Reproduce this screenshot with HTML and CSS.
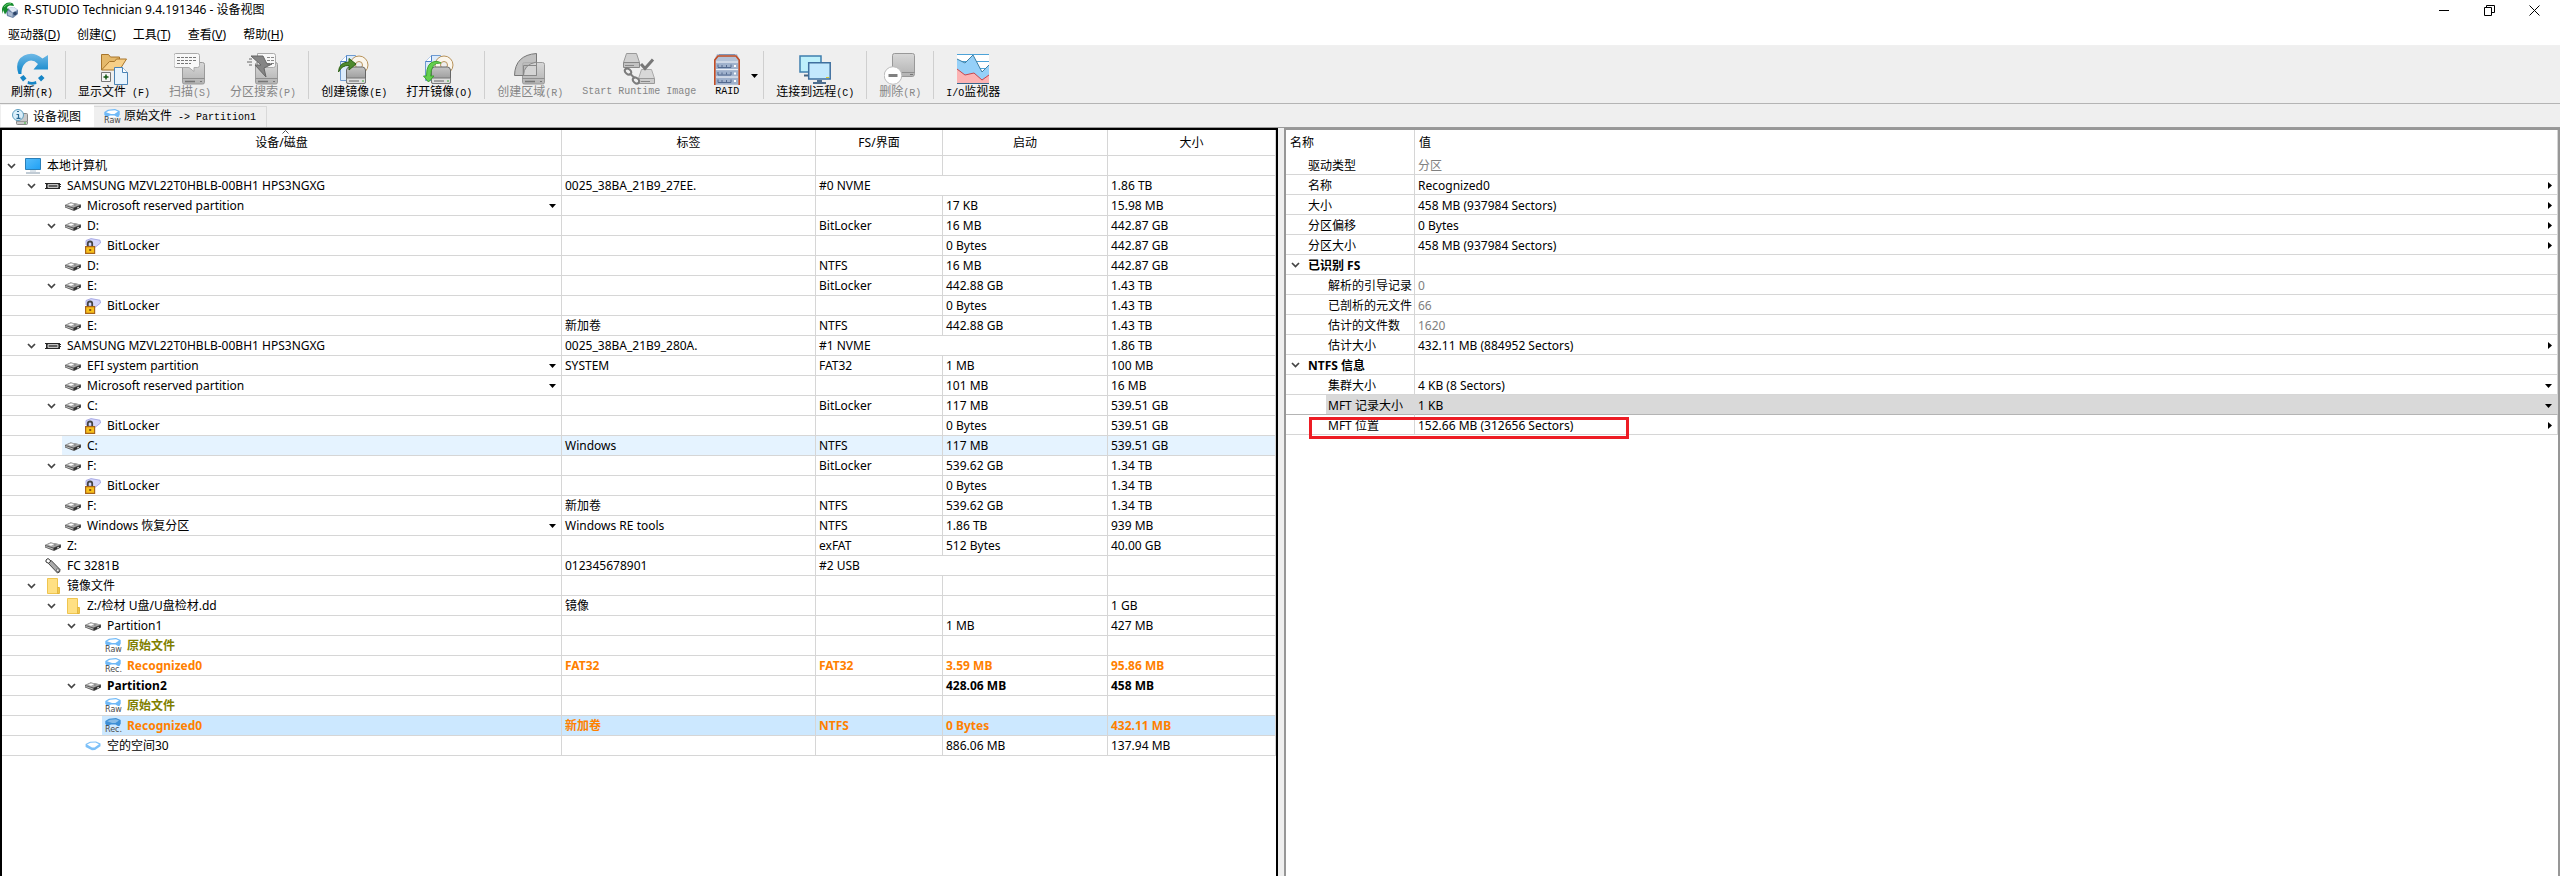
FILE: index.html
```html
<!DOCTYPE html>
<html lang="zh-CN">
<head>
<meta charset="utf-8">
<title>R-STUDIO Technician 9.4.191346 - 设备视图</title>
<link rel="stylesheet" href="styles.css">
</head>
<body>
<svg class="sprite" aria-hidden="true">
  <defs>
    <linearGradient id="gBlue" x1="0" y1="0" x2="0" y2="1"><stop offset="0" stop-color="#6fb9e6"/><stop offset="1" stop-color="#0b84c9"/></linearGradient>
    <linearGradient id="gGrey" x1="0" y1="0" x2="0" y2="1"><stop offset="0" stop-color="#d8d8d8"/><stop offset="1" stop-color="#b2b2b2"/></linearGradient>
    <linearGradient id="gDisk" x1="0" y1="0" x2="0" y2="1"><stop offset="0" stop-color="#c4c4c4"/><stop offset="1" stop-color="#8e8e8e"/></linearGradient>
    <linearGradient id="gScreen" x1="0" y1="0" x2="1" y2="1"><stop offset="0" stop-color="#56bdfb"/><stop offset="1" stop-color="#1fa0f5"/></linearGradient>
  </defs>
  <symbol id="chev" viewBox="0 0 9 6"><path d="M1 1l3.5 3.6L8 1" fill="none" stroke="#444" stroke-width="1.7"/></symbol>
  <symbol id="down" viewBox="0 0 7 4"><path d="M0 0h7L3.5 4z"/></symbol>
  <symbol id="right" viewBox="0 0 4 7"><path d="M0 0v7l4-3.5z"/></symbol>
  <symbol id="pc" viewBox="0 0 16 16"><path d="M.5.5h15v11H.5z" fill="url(#gScreen)" stroke="#2a7fb8"/><path d="M5 13h6" stroke="#b5c6d4"/><path d="M1 15h14" stroke="#8297aa"/></symbol>
  <symbol id="nvme" viewBox="0 0 16 16"><path d="M0 5h15v1h1v1h-1v1h1v1h-1v2H0v-1h1V6H0z" fill="#262626"/><path d="M3 6.500h10v3H3z" fill="#8c8c8c" stroke="#c4c4c4"/><path d="M4 8h8" stroke="#333"/></symbol>
  <symbol id="disk" viewBox="0 0 16 16"><path d="M0 7l5.500-2.500L16 6.500v3L9 13 0 9.500z" fill="#5c5c5c"/><path d="M0 7l5.500-2.500L16 6.500 8.500 9.500z" fill="#a9a9a9"/><path d="M3 6.800l3-1.300 3 .8-3 1.400z" fill="#fff"/><path d="M9 6.500l3 .3-2.500 1z" fill="#6f6f6f"/><path d="M.5 8.500L8 11" stroke="#bdbdbd"/><path d="M9 10l6.500-2.800v2L9 12.200z" fill="#2f2f2f"/><path d="M12 9.600l2-.9v1l-2 .9z" fill="#d5d5d5"/></symbol>
  <symbol id="lock" viewBox="0 0 16 16"><path d="M1 2.500L6 .6l9 1.600.5 2.800-5 4L1 7z" fill="#d5d6fa" stroke="#9b9ce0" stroke-width=".8"/><path d="M2.800 9V5.500q0-2 2.200-2t2.200 2V9" fill="none" stroke="#444" stroke-width="1.800"/><path d="M.6 8.600h9v6.800h-9z" fill="#f8c21c" stroke="#a8641a" stroke-width="1.200"/><path d="M4.200 11h2v2h-2z" fill="#8a5714"/></symbol>
  <symbol id="usb" viewBox="0 0 16 16"><path d="M1 2l2-1.500 3 2.500-2 2.500L1 4z" fill="#fff" stroke="#333"/><path d="M3.500 5.500l2.700-3L15 11.500q.5 3-2.500 3.500z" fill="#aaa" stroke="#444"/><path d="M11.500 11h2.500v2.500h-2.500z" fill="#eee" stroke="#555" stroke-width=".6"/></symbol>
  <symbol id="folder" viewBox="0 0 16 16"><path d="M2.500.5h10v9h2v6h-12z" fill="#ffe083" stroke="#efc54f"/><path d="M12.500 15.500v-6h1.500v6z" fill="#ffd75c" stroke="#d9a92f" stroke-width=".7"/></symbol>
  <symbol id="free" viewBox="0 0 16 16"><path d="M.6 6L5 3.800l6-.3 4.500 2v2.700L10 12 7 12.200.6 9z" fill="#7cc0f8"/><path d="M2 6.500L5.500 4.800l5-.2L14 6.200 9.500 9.500H7z" fill="#fff"/></symbol>
  <symbol id="vol" viewBox="0 0 16 8"><path d="M.3 3L4 .8 11 0l4.700 2v3.500L14.500 8H1.500L.3 5.500z" fill="#6fb9f7"/><path d="M2 3.200L5 1.800l6-.6 3 1.300L10.500 5H7z" fill="#fff"/><path d="M3 8l3-1.500h4.500L13 8z" fill="#fff"/></symbol>
  <symbol id="volsel" viewBox="0 0 16 8"><path d="M.3 3L4 .8 11 0l4.700 2v3.500L14.500 8H1.500L.3 5.500z" fill="#3c8fd6"/><path d="M2 3.200L5 1.800l6-.6 3 1.300L10.500 5H7z" fill="#86bbe6"/><path d="M3 8l3-1.500h4.500L13 8z" fill="#cce8ff"/></symbol>
  <symbol id="ghost" viewBox="0 0 32 32"><path d="M8.500 11.500q0-2 2-2h18q2 0 2 2v18q0 1.500-2 1.500h-18q-2 0-2-1.500z" fill="url(#gGrey)" stroke="#9a9a9a"/><path d="M8.500 25.500h22" stroke="#8f8f8f"/><path d="M11 28.500h10" stroke="#777" stroke-width="1.500"/><path d="M26 28.500h2" stroke="#777"/></symbol>
  <symbol id="image" viewBox="0 0 32 32"><path d="M2.500 8.500l6-6h9v25h-15z" fill="#dcebfb" stroke="#6f9bd1"/><path d="M2.500 8.500h6v-6" fill="#fff" stroke="#4b7fc4"/><circle cx="21" cy="12" r="9" fill="#fbf6ec" stroke="#b8935a"/><circle cx="21" cy="12" r="3.500" fill="#eee" stroke="#b8935a"/><path d="M8.500 17q.5-3 3-3h13q2.500 0 3 3v12q0 1.500-1.500 1.500H10q-1.500 0-1.500-1.500z" fill="url(#gDisk)" stroke="#666"/><path d="M8.500 25h19v4q0 1.500-1.500 1.500H10q-1.500 0-1.500-1.500z" fill="#ddd" stroke="#777"/><path d="M11 28h10" stroke="#666"/><path d="M24 28h2" stroke="#3a3"/></symbol>
</svg>

<header class="titlebar">
  <svg class="i16" viewBox="0 0 16 16"><path d="M6 6l6-1 4 3v4l-5 4-6-2-1-5z" fill="#6f87a8"/><path d="M6 6l6-1 3.500 3-5 2.500z" fill="#dfe8f5"/><path d="M6 9l4.500 2v4L6 13z" fill="#a9b9d0"/><circle cx="13" cy="11.500" r="1.800" fill="#2c4468"/><path d="M1 12Q-1.500 6 2 3q4-4 9-1.500l1 2.500-4-.5Q5 4 5 6.500l1.500.5L3 12.500 1 8z" fill="#138a2c"/><path d="M2 5q2.500-3.500 7-3.500" fill="none" stroke="#67c96f"/></svg>
  <h1>R-STUDIO Technician 9.4.191346 - 设备视图</h1>
  <div class="winbtns">
    <button type="button" aria-label="最小化"><svg viewBox="0 0 11 11"><path d="M0 5.500h10"/></svg></button>
    <button type="button" aria-label="还原"><svg viewBox="0 0 11 11"><path d="M.5 2.500h7v8h-7zM2.500 2.500v-2h8v7h-3"/></svg></button>
    <button type="button" aria-label="关闭"><svg viewBox="0 0 11 11"><path d="M.5.5l10 10M10.500.5l-10 10"/></svg></button>
  </div>
</header>

<nav class="menubar">
  <button type="button">驱动器(<u>D</u>)</button>
  <button type="button">创建(<u>C</u>)</button>
  <button type="button">工具(<u>T</u>)</button>
  <button type="button">查看(<u>V</u>)</button>
  <button type="button">帮助(<u>H</u>)</button>
</nav>

<div class="toolbar" role="toolbar">
  <div class="group">
    <button type="button"><svg class="i32" viewBox="0 0 32 32"><path d="M2.500 21Q-2 8 8 2.500 17.500-2 26.500 5.500L32 2v14.500H17.500L22 11q-6-6-12-1.500Q5 14 5.500 21z" fill="url(#gBlue)"/><path d="M4 24.500l3.500-2.500 3 3.500-3.500 3zM12 28q4 2 8 0l.5 3q-4.500 1.500-9 0zM22 25l3.500-3 3 3-3.500 3.500z" fill="#1585c6"/></svg><span>刷新<span class="m">(R)</span></span></button>
  </div>
  <div class="group">
    <button type="button"><svg class="i32" viewBox="0 0 32 32"><path d="M3.500 17V1.500h7l2 2.500h9v3" fill="#e5b96b" stroke="#a8752b"/><path d="M3.500 17l8-8.500h5l2-2.500h10l-7 11z" fill="#f7cf87" stroke="#a8752b"/><path d="M3.500 19.500h9v9h-9z" fill="#f6f6f6" stroke="#777"/><path d="M5.500 24h5M8 21.500v5" stroke="#151" stroke-width="1.500"/><path d="M16.500 14.500h8l5 5v12h-13z" fill="#e7f3fd" stroke="#4b83b5"/><path d="M24.500 14.500v5h5" fill="#fff" stroke="#4b83b5"/></svg><span>显示文件<span class="m">&nbsp;(F)</span></span></button>
    <button type="button" disabled><svg class="i32" viewBox="0 0 32 32"><use href="#ghost"/><path d="M1.500.5h22q2 0 2 2v10q0 2-2 2H20v4l-5-4H1.500q-1.500 0-1.500-2v-10q0-2 1.500-2z" fill="#f8f8f8" stroke="#aaa"/><path d="M3 4.500h19M3 7.500h19M3 10.500h14" stroke="#777" stroke-dasharray="3 1"/></svg><span>扫描<span class="m">(S)</span></span></button>
    <button type="button" disabled><svg class="i32" viewBox="0 0 32 32"><use href="#ghost"/><path d="M10.500.5h16q2 0 2 2v10q0 2-2 2h-16z" fill="#f8f8f8" stroke="#aaa"/><path d="M20 4.500h7M20 7.500h7M20 10.500h7" stroke="#888" stroke-dasharray="3 1"/><path d="M4 3h12l4 8h5L17 15l2 9L8 12h6z" fill="#858585" stroke="#666"/><path d="M2 6h3M0 9h5M2 12h3" stroke="#666"/></svg><span>分区搜索<span class="m">(P)</span></span></button>
  </div>
  <div class="group">
    <button type="button"><svg class="i32" viewBox="0 0 32 32"><use href="#image"/><path d="M.5 19Q1 9 11 9V5.500L18 11l-7 6v-4.500Q4 12 .5 19z" fill="#4e8a2e" stroke="#2f6317"/></svg><span>创建镜像<span class="m">(E)</span></span></button>
    <button type="button"><svg class="i32" viewBox="0 0 32 32"><use href="#image"/><path d="M18 10Q8 9 7.500 23H11l-5.500 6L.5 23h3Q3.500 9 12 8.500q4-.5 6 1.500z" fill="#63cf4d" stroke="#3fa430"/></svg><span>打开镜像<span class="m">(O)</span></span></button>
  </div>
  <div class="group">
    <button type="button" disabled><svg class="i32" viewBox="0 0 32 32"><use href="#ghost"/><path d="M.5 22.500Q1 2 22.500.5v22z" fill="#b5b5b5" fill-opacity=".8" stroke="#777"/><path d="M9.500 22.500q0-11 13-13.500v13.500z" fill="#d4d4d4" stroke="#888"/><path d="M9.500 22.500V12.500h13" fill="none" stroke="#888"/></svg><span>创建区域<span class="m">(R)</span></span></button>
    <button type="button" disabled><svg class="i32" viewBox="0 0 32 32"><path d="M3.500.5h10l3 9H.5z" fill="#d0d0d0" stroke="#999"/><path d="M.5 9.500h16v5H.5z" fill="#c2c2c2" stroke="#888"/><path d="M18.500 16.500h10l3 9h-16z" fill="#d8d8d8" stroke="#aaa"/><path d="M15.500 25.500h16v5h-16z" fill="#ccc" stroke="#999"/><path d="M2 12.500h9M18 28.500h9" stroke="#888"/><path d="M18 11l4 4.500 8-9" fill="none" stroke="#777" stroke-width="3"/><g fill="none" stroke="#7c7c7c" stroke-width="2"><ellipse cx="5" cy="18.500" rx="3.500" ry="2.500" transform="rotate(40 5 18.500)"/><ellipse cx="13" cy="27.500" rx="3.500" ry="2.500" transform="rotate(40 13 27.500)"/><path d="M7 20.500l4.500 4.500"/></g></svg><span class="m">Start Runtime Image</span></button>
    <button type="button" class="raid"><svg class="i32" viewBox="0 0 32 32"><path d="M6 1h20l3 6v25H3V7z" fill="#b3c1d6"/><path d="M8 1.500h16" stroke="#8094b5"/><path d="M3.800 32V7L7 3h18l3.200 4v25" fill="none" stroke="#c44c22" stroke-width="1.600"/><path d="M5 10h22v6H5zM5 17.500h22v6H5zM5 25h22v6H5z" fill="#9fb1cc"/><path d="M7 11.500v3h13v-3M7 19v3h13v-3M7 26.500v3h13v-3" fill="none" stroke="#52698f"/><path d="M11 12v2M15.500 12v2M11 19.500v2M15.500 19.500v2M11 27v2M15.500 27v2" stroke="#52698f"/><path d="M5 9h22M5 16.500h22M5 24h22" stroke="#e9eef6"/><path d="M23 12h2v2h-2zM23 19.500h2v2h-2zM23 27h2v2h-2z" fill="#fff"/></svg><span class="m">RAID</span></button>
    <button type="button" class="drop" aria-label="RAID 选项"><svg class="dn"><use href="#down"/></svg></button>
  </div>
  <div class="group">
    <button type="button"><svg class="i32" viewBox="0 0 32 32"><path d="M1 3h21v16H1z" fill="#bdf0fb" stroke="#3f7fae" stroke-width="1.500"/><path d="M5 22.500h7" stroke="#44627f" stroke-width="2"/><path d="M9.700 9.700h21.500V26H9.700z" fill="#c3e8fd" stroke="#3f6f9e" stroke-width="1.500"/><path d="M27 24.500h3" stroke="#d8c72a"/><path d="M18 27h5v2h4v2H14v-2h4z" fill="#4d6e8e"/></svg><span>连接到远程<span class="m">(C)</span></span></button>
  </div>
  <div class="group">
    <button type="button" disabled><svg class="i32" viewBox="0 0 32 32"><path d="M8.500 2.500q0-2 2-2h18q2 0 2 2v18q0 3-2 3h-18q-2 0-2-3z" fill="url(#gGrey)" stroke="#999"/><path d="M8.500 19.500h22" stroke="#8f8f8f"/><path d="M26 21.500h3" stroke="#777"/><circle cx="9" cy="22.500" r="8.800" fill="#fff" stroke="#bbb"/><path d="M4.500 22.500h9" stroke="#808080" stroke-width="3"/></svg><span>删除<span class="m">(R)</span></span></button>
  </div>
  <div class="group">
    <button type="button"><svg class="i32" viewBox="0 0 32 32"><path d="M0 1h32v30H0z" fill="#fff"/><path d="M0 1.500h32M0 8.500h32M0 15.500h32" stroke="#4da3d8"/><path d="M0 6l8 4 8-8 9 17 7-7v19H0z" fill="#95d0f8"/><path d="M0 6l8 4 8-8 9 17 7-7" fill="none" stroke="#3f7fa3"/><path d="M0 16l8 6 9-2 8 7 7-5v9H0z" fill="#fcb3b3"/><path d="M0 16l8 6 9-2 8 7 7-5" fill="none" stroke="#c8474d"/><path d="M0 30.500h32" stroke="#38658a"/></svg><span><span class="m">I/O</span>监视器</span></button>
  </div>
</div>

<div class="tabs" role="tablist">
  <button type="button" class="tab active" role="tab" aria-selected="true"><svg class="i16" viewBox="0 0 16 16"><path d="M5.500 4.500h9q1 0 1 1v9q0 1-1 1h-9q-1 0-1-1v-9z" fill="#c9c9c9" stroke="#888"/><path d="M4 12.500h12" stroke="#999"/><path d="M12 14h2" stroke="#3b3"/><circle cx="6" cy="6" r="5.500" fill="#d9eefa" stroke="#5f9fc0"/><path d="M5 2.500h2M4.500 5.500H6.500V9M4.500 9.300h4" fill="none" stroke="#2a6a94" stroke-width="1.200"/></svg><span>设备视图</span></button>
  <button type="button" class="tab" role="tab" aria-selected="false"><span class="tagged"><svg class="v"><use href="#vol"/></svg><span class="tag">Raw</span></span><span>原始文件<span class="m">&nbsp;-&gt;&nbsp;Partition1</span></span></button>
</div>

<main class="panes">
<section class="pane devices">
<table class="grid">
<colgroup><col><col class="c-label"><col class="c-fs"><col class="c-start"><col class="c-size"></colgroup>
<thead><tr><th><svg class="sort" viewBox="0 0 7 4"><path d="M.5 3.500l3-3 3 3"/></svg>设备/磁盘</th><th>标签</th><th>FS/界面</th><th>启动</th><th>大小</th></tr></thead>
<tbody>
<tr><td><div class="node l0"><button type="button" class="tw"><svg><use href="#chev"/></svg></button><div class="item"><svg class="i16"><use href="#pc"/></svg>本地计算机</div></div></td><td></td><td></td><td></td><td></td></tr>
<tr><td><div class="node l1"><button type="button" class="tw"><svg><use href="#chev"/></svg></button><div class="item"><svg class="i16"><use href="#nvme"/></svg>SAMSUNG MZVL22T0HBLB-00BH1 HPS3NGXG</div></div></td><td>0025_38BA_21B9_27EE.</td><td colspan="2">#0 NVME</td><td>1.86 TB</td></tr>
<tr><td><div class="node l2"><span class="tw"></span><div class="item"><svg class="i16"><use href="#disk"/></svg>Microsoft reserved partition<button type="button" class="pick"><svg class="dn"><use href="#down"/></svg></button></div></div></td><td></td><td></td><td>17 KB</td><td>15.98 MB</td></tr>
<tr><td><div class="node l2"><button type="button" class="tw"><svg><use href="#chev"/></svg></button><div class="item"><svg class="i16"><use href="#disk"/></svg>D:</div></div></td><td></td><td>BitLocker</td><td>16 MB</td><td>442.87 GB</td></tr>
<tr><td><div class="node l3"><span class="tw"></span><div class="item"><svg class="i16"><use href="#lock"/></svg>BitLocker</div></div></td><td></td><td></td><td>0 Bytes</td><td>442.87 GB</td></tr>
<tr><td><div class="node l2"><span class="tw"></span><div class="item"><svg class="i16"><use href="#disk"/></svg>D:</div></div></td><td></td><td>NTFS</td><td>16 MB</td><td>442.87 GB</td></tr>
<tr><td><div class="node l2"><button type="button" class="tw"><svg><use href="#chev"/></svg></button><div class="item"><svg class="i16"><use href="#disk"/></svg>E:</div></div></td><td></td><td>BitLocker</td><td>442.88 GB</td><td>1.43 TB</td></tr>
<tr><td><div class="node l3"><span class="tw"></span><div class="item"><svg class="i16"><use href="#lock"/></svg>BitLocker</div></div></td><td></td><td></td><td>0 Bytes</td><td>1.43 TB</td></tr>
<tr><td><div class="node l2"><span class="tw"></span><div class="item"><svg class="i16"><use href="#disk"/></svg>E:</div></div></td><td>新加卷</td><td>NTFS</td><td>442.88 GB</td><td>1.43 TB</td></tr>
<tr><td><div class="node l1"><button type="button" class="tw"><svg><use href="#chev"/></svg></button><div class="item"><svg class="i16"><use href="#nvme"/></svg>SAMSUNG MZVL22T0HBLB-00BH1 HPS3NGXG</div></div></td><td>0025_38BA_21B9_280A.</td><td colspan="2">#1 NVME</td><td>1.86 TB</td></tr>
<tr><td><div class="node l2"><span class="tw"></span><div class="item"><svg class="i16"><use href="#disk"/></svg>EFI system partition<button type="button" class="pick"><svg class="dn"><use href="#down"/></svg></button></div></div></td><td>SYSTEM</td><td>FAT32</td><td>1 MB</td><td>100 MB</td></tr>
<tr><td><div class="node l2"><span class="tw"></span><div class="item"><svg class="i16"><use href="#disk"/></svg>Microsoft reserved partition<button type="button" class="pick"><svg class="dn"><use href="#down"/></svg></button></div></div></td><td></td><td></td><td>101 MB</td><td>16 MB</td></tr>
<tr><td><div class="node l2"><button type="button" class="tw"><svg><use href="#chev"/></svg></button><div class="item"><svg class="i16"><use href="#disk"/></svg>C:</div></div></td><td></td><td>BitLocker</td><td>117 MB</td><td>539.51 GB</td></tr>
<tr><td><div class="node l3"><span class="tw"></span><div class="item"><svg class="i16"><use href="#lock"/></svg>BitLocker</div></div></td><td></td><td></td><td>0 Bytes</td><td>539.51 GB</td></tr>
<tr class="hover"><td><div class="node l2"><span class="tw"></span><div class="item"><svg class="i16"><use href="#disk"/></svg>C:</div></div></td><td>Windows</td><td>NTFS</td><td>117 MB</td><td>539.51 GB</td></tr>
<tr><td><div class="node l2"><button type="button" class="tw"><svg><use href="#chev"/></svg></button><div class="item"><svg class="i16"><use href="#disk"/></svg>F:</div></div></td><td></td><td>BitLocker</td><td>539.62 GB</td><td>1.34 TB</td></tr>
<tr><td><div class="node l3"><span class="tw"></span><div class="item"><svg class="i16"><use href="#lock"/></svg>BitLocker</div></div></td><td></td><td></td><td>0 Bytes</td><td>1.34 TB</td></tr>
<tr><td><div class="node l2"><span class="tw"></span><div class="item"><svg class="i16"><use href="#disk"/></svg>F:</div></div></td><td>新加卷</td><td>NTFS</td><td>539.62 GB</td><td>1.34 TB</td></tr>
<tr><td><div class="node l2"><span class="tw"></span><div class="item"><svg class="i16"><use href="#disk"/></svg>Windows 恢复分区<button type="button" class="pick"><svg class="dn"><use href="#down"/></svg></button></div></div></td><td>Windows RE tools</td><td>NTFS</td><td>1.86 TB</td><td>939 MB</td></tr>
<tr><td><div class="node l1"><span class="tw"></span><div class="item"><svg class="i16"><use href="#disk"/></svg>Z:</div></div></td><td></td><td>exFAT</td><td>512 Bytes</td><td>40.00 GB</td></tr>
<tr><td><div class="node l1"><span class="tw"></span><div class="item"><svg class="i16"><use href="#usb"/></svg>FC 3281B</div></div></td><td>012345678901</td><td colspan="2">#2 USB</td><td></td></tr>
<tr><td><div class="node l1"><button type="button" class="tw"><svg><use href="#chev"/></svg></button><div class="item"><svg class="i16"><use href="#folder"/></svg>镜像文件</div></div></td><td></td><td></td><td></td><td></td></tr>
<tr><td><div class="node l2"><button type="button" class="tw"><svg><use href="#chev"/></svg></button><div class="item"><svg class="i16"><use href="#folder"/></svg>Z:/检材 U盘/U盘检材.dd</div></div></td><td>镜像</td><td></td><td></td><td>1 GB</td></tr>
<tr><td><div class="node l3"><button type="button" class="tw"><svg><use href="#chev"/></svg></button><div class="item"><svg class="i16"><use href="#disk"/></svg>Partition1</div></div></td><td></td><td></td><td>1 MB</td><td>427 MB</td></tr>
<tr class="raw"><td><div class="node l4"><span class="tw"></span><div class="item"><span class="tagged"><svg class="v"><use href="#vol"/></svg><span class="tag">Raw</span></span>原始文件</div></div></td><td></td><td></td><td></td><td></td></tr>
<tr class="rec"><td><div class="node l4"><span class="tw"></span><div class="item"><span class="tagged"><svg class="v"><use href="#vol"/></svg><span class="tag">Rec.</span></span>Recognized0</div></div></td><td>FAT32</td><td>FAT32</td><td>3.59 MB</td><td>95.86 MB</td></tr>
<tr class="strong"><td><div class="node l3"><button type="button" class="tw"><svg><use href="#chev"/></svg></button><div class="item"><svg class="i16"><use href="#disk"/></svg>Partition2</div></div></td><td></td><td></td><td>428.06 MB</td><td>458 MB</td></tr>
<tr class="raw"><td><div class="node l4"><span class="tw"></span><div class="item"><span class="tagged"><svg class="v"><use href="#vol"/></svg><span class="tag">Raw</span></span>原始文件</div></div></td><td></td><td></td><td></td><td></td></tr>
<tr class="rec selected"><td><div class="node l4"><span class="tw"></span><div class="item"><span class="tagged"><svg class="v"><use href="#volsel"/></svg><span class="tag">Rec.</span></span>Recognized0</div></div></td><td>新加卷</td><td>NTFS</td><td>0 Bytes</td><td>432.11 MB</td></tr>
<tr><td><div class="node l3"><span class="tw"></span><div class="item"><svg class="i16"><use href="#free"/></svg>空的空间30</div></div></td><td></td><td></td><td>886.06 MB</td><td>137.94 MB</td></tr>
</tbody>
</table>
</section>

<section class="pane props">
<table class="grid">
<colgroup><col class="c-name"><col></colgroup>
<thead><tr><th>名称</th><th>值</th></tr></thead>
<tbody>
<tr><td><div class="node l0"><span class="tw"></span><div class="item">驱动类型</div></div></td><td class="dim">分区</td></tr>
<tr><td><div class="node l0"><span class="tw"></span><div class="item">名称</div></div></td><td><div class="val">Recognized0<button type="button"><svg class="rt"><use href="#right"/></svg></button></div></td></tr>
<tr><td><div class="node l0"><span class="tw"></span><div class="item">大小</div></div></td><td><div class="val">458 MB (937984 Sectors)<button type="button"><svg class="rt"><use href="#right"/></svg></button></div></td></tr>
<tr><td><div class="node l0"><span class="tw"></span><div class="item">分区偏移</div></div></td><td><div class="val">0 Bytes<button type="button"><svg class="rt"><use href="#right"/></svg></button></div></td></tr>
<tr><td><div class="node l0"><span class="tw"></span><div class="item">分区大小</div></div></td><td><div class="val">458 MB (937984 Sectors)<button type="button"><svg class="rt"><use href="#right"/></svg></button></div></td></tr>
<tr class="strong"><td><div class="node l0"><button type="button" class="tw"><svg><use href="#chev"/></svg></button><div class="item">已识别 FS</div></div></td><td></td></tr>
<tr><td><div class="node l1"><span class="tw"></span><div class="item">解析的引导记录</div></div></td><td class="dim">0</td></tr>
<tr><td><div class="node l1"><span class="tw"></span><div class="item">已剖析的元文件</div></div></td><td class="dim">66</td></tr>
<tr><td><div class="node l1"><span class="tw"></span><div class="item">估计的文件数</div></div></td><td class="dim">1620</td></tr>
<tr><td><div class="node l1"><span class="tw"></span><div class="item">估计大小</div></div></td><td><div class="val">432.11 MB (884952 Sectors)<button type="button"><svg class="rt"><use href="#right"/></svg></button></div></td></tr>
<tr class="strong"><td><div class="node l0"><button type="button" class="tw"><svg><use href="#chev"/></svg></button><div class="item">NTFS 信息</div></div></td><td></td></tr>
<tr><td><div class="node l1"><span class="tw"></span><div class="item">集群大小</div></div></td><td><div class="val">4 KB (8 Sectors)<button type="button"><svg class="dn"><use href="#down"/></svg></button></div></td></tr>
<tr class="current"><td><div class="node l1"><span class="tw"></span><div class="item">MFT 记录大小</div></div></td><td><div class="val">1 KB<button type="button"><svg class="dn"><use href="#down"/></svg></button></div></td></tr>
<tr><td><div class="node l1"><span class="tw"></span><div class="item">MFT 位置</div></div></td><td><div class="val">152.66 MB (312656 Sectors)<button type="button"><svg class="rt"><use href="#right"/></svg></button></div></td></tr>
</tbody>
</table>
<div class="mark"></div>
</section>
</main>
</body>
</html>
```
FILE: styles.css
```css
* { box-sizing: border-box; }

body {
  margin: 0;
  min-height: 100vh;
  display: flex;
  flex-direction: column;
  background: #efefef;
  color: #000;
  font: 12px/16px "Noto Sans", "Noto Sans CJK SC", sans-serif;
}

button {
  margin: 0;
  padding: 0;
  border: 0;
  background: none;
  color: inherit;
  font: inherit;
}

svg { display: block; flex: none; }
.sprite { position: absolute; width: 0; height: 0; }
.i16 { width: 16px; height: 16px; }
.i32 { width: 32px; height: 32px; }
.dn { width: 7px; height: 4px; }
.rt { width: 4px; height: 7px; }
.m { font-family: "Liberation Mono", monospace; font-size: 10px; }

/* title bar */
.titlebar {
  display: flex;
  align-items: center;
  height: 24px;
  padding: 0 20px 4px 2px;
  background: #fff;
}
.titlebar h1 { margin: 0 auto 0 6px; font-size: 12px; font-weight: 400; }
.winbtns { display: flex; gap: 34px; }
.winbtns svg { width: 11px; height: 11px; fill: none; stroke: #000; }

/* menu bar */
.menubar {
  display: flex;
  gap: 17px;
  height: 22px;
  padding: 0 8px;
  background: #fff;
  border-bottom: 1px solid #f0f0f0;
}
.menubar button { line-height: 20px; }

/* toolbar */
.toolbar {
  display: flex;
  margin-top: 1px;
  padding: 4px 0;
  border-bottom: 1px solid #b4b4b4;
}
.group {
  display: flex;
  gap: 19px;
  height: 48px;
  padding: 2px 12px 0;
  border-right: 1px solid #cfcfcf;
}
.group:first-child { padding-left: 11px; }
.group:last-child { border-right: 0; }
.group:has(.drop) { padding-right: 5px; }
.toolbar button {
  display: flex;
  flex-direction: column;
  align-items: center;
  line-height: 14px;
  white-space: nowrap;
}
.toolbar button:disabled { color: #868686; }
.toolbar .raid { margin: 0 -4px; }
.toolbar .drop { justify-content: center; margin-left: -7px; }

/* tabs */
.tabs {
  display: flex;
  align-items: flex-end;
  height: 24px;
  padding-left: 1px;
  border-bottom: 1px solid #9a9a9a;
}
.tab {
  display: flex;
  align-items: center;
  gap: 4px;
  height: 21px;
  padding: 0 10px;
  border: 1px solid #d9d9d9;
  border-width: 1px 1px 0 0;
}
.tab.active { gap: 5px; height: 22px; padding: 0 12px 0 11px; background: #fff; border-color: #fff; }

.tagged { display: flex; flex-direction: column; flex: none; width: 16px; height: 16px; }
.v { width: 16px; height: 8px; }
.tag { font: 8px/8px "DejaVu Sans", sans-serif; color: #4a4a4a; }

/* panes */
.panes { display: flex; flex: 1; justify-content: space-between; }
.pane { position: relative; background: #fff; }
.devices { width: calc(50% - 2px); border: 2px solid #000; border-bottom: 0; }
.props { width: calc(50% - 4px); border: 2px solid #979797; border-bottom: 0; }

.grid { width: 100%; table-layout: fixed; border-spacing: 0; }
.c-label { width: 254px; }
.c-fs { width: 127px; }
.c-start { width: 165px; }
.c-size { width: 168px; }
.c-name { width: 129px; }

.grid th {
  position: relative;
  height: 26px;
  padding: 0;
  font-weight: 400;
  border: 1px solid #d6d6d6;
  border-width: 0 1px 1px 0;
}
.grid td {
  height: 20px;
  padding: 0 3px;
  border: 1px solid #d6d6d6;
  border-width: 0 1px 1px 0;
  line-height: 19px;
  white-space: nowrap;
}
.grid td:first-child { padding: 0; }
.sort { position: absolute; top: 0; left: 50%; width: 7px; height: 4px; fill: none; stroke: #555; }

.node { display: flex; height: 19px; }
.l1 { padding-left: 20px; }
.l2 { padding-left: 40px; }
.l3 { padding-left: 60px; }
.l4 { padding-left: 80px; }
.tw { display: flex; flex: none; align-items: center; justify-content: center; width: 20px; padding-right: 1px; }
.tw svg { width: 9px; height: 6px; }
.item { display: flex; flex: 1; align-items: center; gap: 6px; padding: 0 5px 0 3px; }
.pick { margin-left: auto; }

.hover .item, .hover td + td { background: #e5f3ff; }
.selected .item, .selected td + td { background: #cce8ff; }
.strong { font-weight: 700; }
.raw { font-weight: 700; color: #808000; }
.rec { font-weight: 700; color: #ff8000; }

/* properties */
.props th { height: 25px; padding: 0 4px; text-align: left; border-bottom: 0; }
.props td { padding: 2px 5px 0 3px; line-height: 17px; }
.props .item { padding: 2px 0 0 2px; }
.props .l1 { padding-left: 20px; }
.val { display: flex; align-items: center; justify-content: space-between; }
.dim { color: #808080; }
.current .item, .current td + td { background: #d9d9d9; }
.current td { border-bottom-color: #b4b4b4; }
.current td:first-child { border-right-color: #d9d9d9; }

.mark {
  position: absolute;
  top: 287px;
  left: 23px;
  width: 320px;
  height: 22px;
  border: 3px solid #ed1c24;
}
```
